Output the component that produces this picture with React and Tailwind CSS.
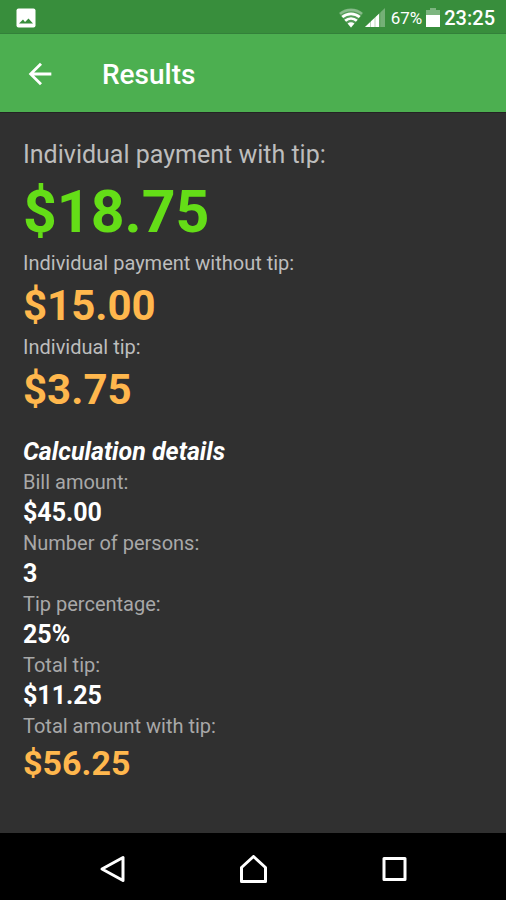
const payments = [
  {
    label: 'Individual payment with tip:',
    value: '$18.75',
    labelClass: 'text-[25px] leading-[38px]',
    valueClass: 'text-[59px] leading-[76px] text-[#64dd17]',
  },
  {
    label: 'Individual payment without tip:',
    value: '$15.00',
    labelClass: 'text-[20px] leading-[27px]',
    valueClass: 'text-[42px] leading-[57px] text-[#ffb74d]',
  },
  {
    label: 'Individual tip:',
    value: '$3.75',
    labelClass: 'text-[20px] leading-[27px]',
    valueClass: 'text-[42px] leading-[57px] text-[#ffb74d]',
  },
];

const details = [
  { label: 'Bill amount:', value: '$45.00' },
  { label: 'Number of persons:', value: '3' },
  { label: 'Tip percentage:', value: '25%' },
  { label: 'Total tip:', value: '$11.25' },
  { label: 'Total amount with tip:', value: '$56.25', total: true },
];

function StatusBar() {
  return (
    <div className="flex h-[34px] items-center justify-between border-b border-[#33803a] bg-[#388e3c] pt-0.5 pr-[11px] pl-4 text-white">
      <svg className="h-5 w-5" viewBox="0 0 20 20" aria-hidden="true">
        <rect x="0.5" y="0.5" width="19" height="19" rx="2" fill="#fff" />
        <path d="M3 15.5 7 11.500l2 2.500L12.500 10.500l4.500 5z" fill="#388e3c" />
      </svg>

      <div className="flex items-center">
        <svg className="h-5 w-6" viewBox="0 0 24 20" aria-hidden="true">
          <path d="M0 5.5C7-.8 17-.8 24 5.5L12 20z" fill="#fff" fillOpacity="0.15" />
          <path d="M1 5.800C7 .5 17 .5 23 5.800" fill="none" stroke="#fff" strokeOpacity="0.3" strokeWidth="2.600" />
          <path d="M12 19.5 8.6 15.4c2-1.7 4.800-1.700 6.800 0z" fill="#fff" />
          <path d="M6.200 12.800c3.400-2.900 8.200-2.900 11.600 0M3.300 9c5.100-4.300 12.300-4.300 17.400 0" fill="none" stroke="#fff" strokeWidth="2.800" />
        </svg>
        <svg className="ml-0.5 h-5 w-5" viewBox="0 0 20 20" aria-hidden="true">
          <path d="M20 0v19H0z" fill="#fff" fillOpacity="0.3" />
          <path d="M14 5.700V19H0z" fill="#fff" />
          <path d="M5.500 12v7M10 8v11M15 3v16" stroke="#388e3c" strokeOpacity="0.35" />
        </svg>
        <span className="ml-1.5 text-[17px] leading-5">67%</span>
        <svg className="ml-1 h-5 w-[14px]" viewBox="0 0 14 20" aria-hidden="true">
          <path d="M4 0h6v2h4v5H0V2h4z" fill="#fff" fillOpacity="0.35" />
          <path d="M0 7h14v12H0z" fill="#fff" />
        </svg>
        <span className="ml-1 text-[20px] leading-5 font-medium">23:25</span>
      </div>
    </div>
  );
}

function NavBar() {
  return (
    <nav className="flex h-[67px] items-center justify-center gap-[113px] bg-black pt-1">
      <button type="button" aria-label="Back">
        <svg className="h-7 w-7" viewBox="0 0 28 28" fill="none" stroke="#fff" strokeWidth="3" strokeLinejoin="round">
          <path d="M25 2.500v23L4 14z" />
        </svg>
      </button>
      <button type="button" aria-label="Home">
        <svg className="h-7 w-7" viewBox="0 0 28 28" fill="none" stroke="#fff" strokeWidth="3" strokeLinejoin="round">
          <path d="M14.500 1.500 26.500 12.500v14h-24v-14z" />
        </svg>
      </button>
      <button type="button" aria-label="Recent apps">
        <svg className="h-7 w-7" viewBox="0 0 28 28" fill="none" stroke="#fff" strokeWidth="3" strokeLinejoin="round">
          <rect x="4" y="3.500" width="21" height="21" />
        </svg>
      </button>
    </nav>
  );
}

export default function App() {
  return (
    <div className="flex min-h-screen flex-col bg-[#303030] font-['Roboto',sans-serif]">
      <StatusBar />

      {/* App bar */}
      <header className="flex h-[79px] items-center border-b border-[#232323] bg-[#4caf50] pt-0.5 pl-[23px] text-white">
        <button type="button" aria-label="Go back">
          <svg className="h-[34px] w-[34px]" viewBox="0 0 24 24" fill="#fff">
            <path d="M20 11H7.830l5.590-5.590L12 4l-8 8 8 8 1.410-1.410L7.830 13H20v-2z" />
          </svg>
        </button>
        <h1 className="ml-[45px] pt-0.5 text-[28px] leading-8 font-medium">Results</h1>
      </header>

      {/* Results */}
      <main className="flex-1 px-[23px] pt-[23px]">
        <dl>
          {payments.map((item) => (
            <div key={item.label}>
              <dt className={`text-[#bdbdbd] ${item.labelClass}`}>{item.label}</dt>
              <dd className={`font-bold ${item.valueClass}`}>{item.value}</dd>
            </div>
          ))}
        </dl>

        <h2 className="mt-[17px] text-[25px] leading-[33px] font-bold text-white italic">
          Calculation details
        </h2>
        <dl>
          {details.map((item) => (
            <div key={item.label}>
              <dt className="text-[20px] leading-[28px] text-[#a8a8a8]">{item.label}</dt>
              <dd
                className={
                  item.total
                    ? 'text-[34px] leading-[46px] font-bold text-[#ffb74d]'
                    : 'text-[25px] leading-[33px] font-bold text-white'
                }
              >
                {item.value}
              </dd>
            </div>
          ))}
        </dl>
      </main>

      <NavBar />
    </div>
  );
}
